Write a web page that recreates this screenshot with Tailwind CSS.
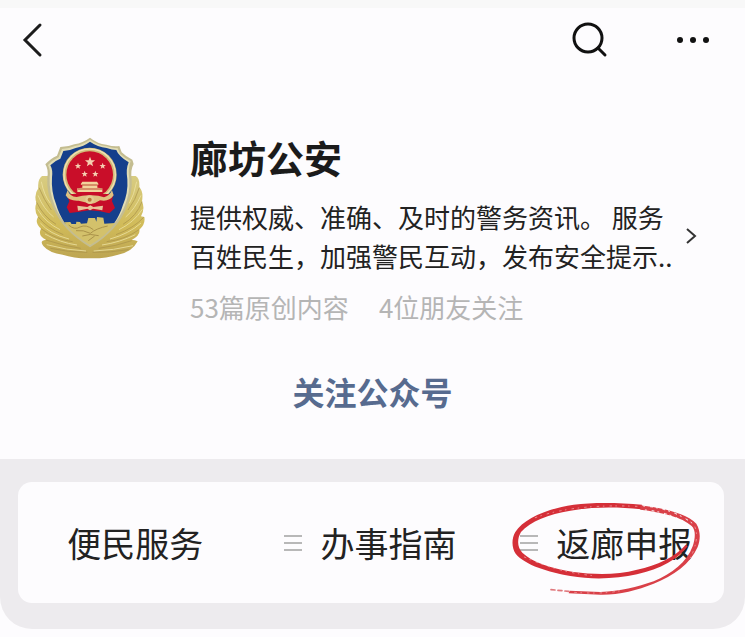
<!DOCTYPE html>
<html lang="zh-CN">
<head>
    <meta charset="UTF-8" />
    <meta name="viewport" content="width=device-width, initial-scale=1.0" />
    <title>廊坊公安</title>
    <script src="https://cdn.jsdelivr.net/npm/@tailwindcss/browser@4"></script>
</head>
<body class="bg-[#fdfcfe] text-[#222222] font-['Noto_Sans_CJK_SC',sans-serif]">
    <div class="h-2 bg-[#f8f8f8]"></div>
    <header class="flex items-center justify-between pl-4 pr-8 h-16">
        <button type="button" aria-label="返回" class="p-1">
            <svg class="w-6 h-10" viewBox="0 0 24 40" fill="none" stroke="#1c1c1c" stroke-width="3">
                <path d="M20 5 L5 20 L20 35" stroke-linecap="round" />
            </svg>
        </button>
        <div class="flex items-center gap-16">
            <button type="button" aria-label="搜索">
                <svg class="w-10 h-10" viewBox="0 0 40 40" fill="none" stroke="#111111" stroke-width="3" stroke-linecap="round">
                    <circle cx="19" cy="18" r="14" />
                    <path d="M29 28 L36 35" />
                </svg>
            </button>
            <button type="button" aria-label="更多">
                <svg class="w-10 h-10" viewBox="0 0 40 40" fill="#111111">
                    <circle cx="7" cy="20" r="3" />
                    <circle cx="20" cy="20" r="3" />
                    <circle cx="33" cy="20" r="3" />
                </svg>
            </button>
        </div>
    </header>

    <main>
        <section class="flex items-start gap-[30px] pl-5 pr-12 pt-[53px]">
            <!-- Emblem -->
            <svg class="w-[140px] h-[145px] shrink-0" viewBox="0 0 420 435" role="img" aria-label="警徽">
                <defs>
                    <linearGradient id="gold" x1="0" y1="0" x2="0" y2="1">
                        <stop offset="0" stop-color="#d8cc82" />
                        <stop offset="0.6" stop-color="#d1bb59" />
                        <stop offset="1" stop-color="#bda552" />
                    </linearGradient>
                    <path id="star" d="M0 -10 L2.6 -3.2 L9.5 -3.1 L4 1.2 L5.9 8.1 L0 4.2 L-5.9 8.1 L-4 1.2 L-9.5 -3.1 L-2.6 -3.2 Z" />
                </defs>
                <!-- Wreath -->
                <path fill="url(#gold)" d="M66 153 Q52 164 55 190 Q41 209 49 233 Q41 257 54 276 Q43 293 63 311 Q52 331 78 344 Q57 347 70 363 Q88 384 128 389 Q164 401 210 400 Q258 401 294 389 Q336 382 353 349 Q342 344 335 345 Q362 331 358 314 Q377 298 373 276 L363 274 Q376 251 366 229 Q371 200 358 187 Q360 160 347 153 Z" />
                <g fill="none" stroke="#a8904a" stroke-width="3" opacity=".65">
                    <path d="M57 188 Q72 225 94 255 M50 232 Q70 274 108 298 M55 276 Q80 309 130 329 M63 311 Q108 344 158 350 M78 345 Q132 363 182 370 M91 370 Q145 382 202 382" />
                    <path d="M358 188 Q347 225 324 255 M366 230 Q350 273 309 298 M371 277 Q342 309 288 329 M357 314 Q315 344 260 350 M335 347 Q290 363 236 370 M326 374 Q270 383 218 382" />
                </g>
                <g fill="none" stroke="#eee3a4" stroke-width="3" opacity=".8">
                    <path d="M64 170 Q72 211 91 235 M54 211 Q71 253 101 276 M53 253 Q75 292 120 314 M61 294 Q88 327 147 342 M75 327 Q120 353 171 360 M80 359 Q140 376 198 378" />
                    <path d="M350 170 Q342 211 328 235 M363 211 Q345 252 317 276 M367 253 Q342 292 297 314 M363 294 Q328 326 270 342 M346 329 Q300 352 246 360 M339 362 Q281 376 221 378" />
                </g>
                <!-- Shield -->
                <path fill="#c4bd91" d="M210 38 Q232 56 259 59 Q282 66 298 63 L305 82 Q319 96 337 104 L341 117 Q331 134 335 163 Q338 205 319 248 Q293 316 210 367 Q127 317 99 247 Q79 203 82 157 Q86 134 76 118 Q92 100 111 92 L121 66 Q145 66 163 58 Q188 54 210 38 Z" />
                <path fill="#e2ddb5" d="M210 44 Q231 60 259 64 Q278 70 293 70 L300 86 Q313 99 332 108 Q323 132 328 163 Q331 204 313 245 Q289 307 210 359 Q131 309 105 244 Q87 202 89 157 Q92 137 84 120 Q96 106 116 97 L126 72 Q147 71 165 63 Q189 59 210 44 Z" />
                <path fill="#153f8c" d="M210 50 Q233 66 260 69 Q276 75 289 75 Q295 93 326 112 Q317 132 322 163 Q325 205 308 242 Q300 269 281 297 L136 297 Q116 266 108 237 Q93 199 96 157 Q99 135 91 121 Q104 107 121 101 L130 78 Q150 77 167 69 Q191 64 210 50 Z" />
                <!-- Great wall -->
                <path fill="#d3c16b" d="M132 292 L151 291 L155 298 L168 297 L169 290 L180 291 L183 296 L201 295 L205 279 L225 279 L229 290 L231 276 L250 278 L253 296 L285 294 Q261 331 210 360 Q160 331 132 292 Z" />
                <path fill="none" stroke="#aa9249" stroke-width="3" d="M146 300 Q163 316 180 306 Q198 297 220 314 M168 317 Q190 314 211 325 Q229 310 263 303 M187 333 Q210 324 236 332 M205 347 L224 333" />
                <!-- National emblem -->
                <circle cx="209" cy="149" r="81" fill="#d1bc79" />
                <circle cx="209" cy="149" r="77" fill="none" stroke="#efe0b3" stroke-width="4" />
                <circle cx="209" cy="149" r="70" fill="#c90e29" />
                <g fill="#f5cfb0">
                    <use href="#star" transform="translate(210 111) scale(1.6)" />
                    <use href="#star" transform="translate(174 123)" />
                    <use href="#star" transform="translate(248 123)" />
                    <use href="#star" transform="translate(194 147)" />
                    <use href="#star" transform="translate(226 147)" />
                </g>
                <path fill="#f2d39c" d="M187 170 L231 170 L236 178 L232 181 L232 188 L247 190 L247 201 L172 201 L172 190 L187 188 L187 181 L182 178 Z" />
                <path stroke="#ba4932" stroke-width="3" d="M186 180 H233 M174 192 H246" />
                <path fill="#c60d29" d="M139 207 L280 207 L276 229 L285 249 L268 265 L240 259 L208 256 L174 261 L149 264 L140 247 L148 229 Z" />
                <path fill="#dfc181" d="M143 196 Q149 215 170 216 Q190 210 209 211 Q234 210 252 217 Q268 213 276 196 L281 211 Q267 232 240 226 L225 234 Q211 239 195 232 L176 227 Q147 229 137 211 Z" />
                <circle cx="209" cy="224" r="13" fill="#e4cc92" />
                <circle cx="209" cy="224" r="6" fill="#b97739" />
                <path fill="#e8c49a" d="M172 242 L202 246 L211 241 L220 246 L249 242 L247 256 L219 251 L210 256 L202 251 L174 257 Z" />
            </svg>
            <div class="flex-1 min-w-0 pt-1">
                <h1 class="text-[38px] leading-[56px] font-bold text-[#1b1b1b]">廊坊公安</h1>
                <div class="flex items-center justify-between pt-3">
                    <p class="text-[26px] leading-[39px] whitespace-nowrap">提供权威、准确、及时的警务资讯。 服务<br />百姓民生，加强警民互动，发布安全提示..</p>
                    <a href="#" aria-label="详情" class="shrink-0">
                        <svg class="w-3 h-5" viewBox="0 0 12 20" fill="none" stroke="#333333" stroke-width="2">
                            <path d="M2 3 L10 10 L2 17" />
                        </svg>
                    </a>
                </div>
                <p class="flex gap-[30px] pt-3 text-[26px] leading-10 text-[#b5b5b5]">
                    <span>53篇原创内容</span>
                    <span>4位朋友关注</span>
                </p>
            </div>
        </section>

        <div class="flex justify-center pt-10 pb-11">
            <button type="button" class="text-[32px] leading-[48px] font-bold text-[#576b8f]">关注公众号</button>
        </div>

        <nav class="bg-[#edebee] rounded-b-[32px] pl-[18px] pr-[21px] pt-[23px] pb-[26px]">
            <div class="grid grid-cols-3 h-[121px] rounded-[14px] bg-[#fdfcfe] text-[34px] divide-x divide-transparent">
                <a href="#" class="flex items-center justify-center">便民服务</a>
                <a href="#" class="flex items-center justify-center gap-[18px]">
                    <svg class="w-[18px] h-5" viewBox="0 0 18 20" stroke="#b8b8b8" stroke-width="2">
                        <path d="M0 3 H18 M0 10 H18 M0 17 H18" />
                    </svg>
                    办事指南
                </a>
                <a href="#" class="relative flex items-center justify-center gap-[18px]">
                    <svg class="w-[18px] h-5" viewBox="0 0 18 20" stroke="#b8b8b8" stroke-width="2">
                        <path d="M0 3 H18 M0 10 H18 M0 17 H18" />
                    </svg>
                    返廊申报
                    <!-- Hand-drawn red ring -->
                    <svg class="absolute inset-0 w-full h-full" viewBox="-4 90 706 363" fill="none" stroke-linecap="round">
                        <path fill="#d52f38" d="M455 158 C390 152 310 150 250 158 C170 170 100 200 75 240 C62 262 65 290 76 305 C105 340 175 360 240 372 C310 384 380 380 440 367 C510 352 565 320 592 283 L586 278 C555 315 500 340 440 353 C380 370 310 368 250 360 C180 348 125 330 96 302 C80 285 80 260 92 240 C120 207 175 187 240 176 C310 164 380 164 452 172 Z" />
                        <path fill="#d94048" d="M450 160 C520 168 590 185 618 215 C632 238 630 265 622 285 C600 335 550 372 490 395 C440 415 385 429 330 428 L235 424 L238 416 L330 420 C390 418 440 405 490 388 C545 365 590 330 607 283 C615 258 617 235 604 222 C575 195 515 181 450 173 Z" />
                        <path stroke="#e0787d" stroke-width="5" stroke-dasharray="12 9" d="M182 413 L235 418" />
                        <path stroke="#fdfcfe" stroke-width="3" stroke-dasharray="3 17 6 12" d="M460 162 Q555 170 616 222 M465 174 Q550 181 606 228" />
                        <path stroke="#f3b9bb" stroke-width="2" stroke-dasharray="5 13 2 18" d="M135 197 Q250 155 440 163 M614 225 Q628 260 600 318 M102 315 Q205 363 320 372 M253 421 Q340 427 390 416" />
                    </svg>
                </a>
            </div>
        </nav>
    </main>
</body>
</html>
